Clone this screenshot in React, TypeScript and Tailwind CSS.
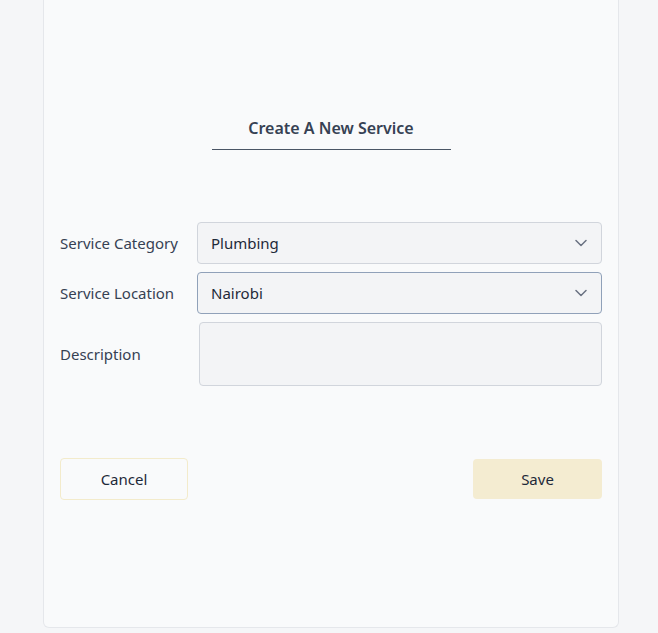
const fields = [
  { label: "Service Category", value: "Plumbing", focused: false },
  { label: "Service Location", value: "Nairobi", focused: true },
];

function Chevron() {
  return (
    <svg width="12" height="8" viewBox="0 0 12 8" fill="none" className="text-gray-500">
      <path d="M1 1.5l5 5 5-5" stroke="currentColor" strokeWidth="1.5" strokeLinecap="round" strokeLinejoin="round" />
    </svg>
  );
}

export default function App() {
  return (
    <div className="min-h-screen bg-[#f5f6f8] font-['Noto_Sans',sans-serif] text-gray-700">
      <div className="ml-[43px] mr-[39px] h-[628px] rounded-b-md border-x border-b border-gray-200 bg-[#f9fafb] px-4">
        <div className="flex justify-center pt-[116px]">
          <h1 className="w-[239px] border-b border-gray-600 pb-[9px] text-center text-base leading-6 font-semibold text-gray-700">
            Create A New Service
          </h1>
        </div>

        <div className="mt-[72px] flex flex-col gap-2">
          {fields.map((f) => (
            <div key={f.label} className="flex items-center">
              <label className="w-[137px] text-[15px]">{f.label}</label>
              <div
                className={
                  f.focused
                    ? "flex h-[42px] flex-1 items-center justify-between rounded-sm border border-slate-400 bg-gray-100 pl-[13px] pr-[14px] text-[15px] text-gray-800"
                    : "flex h-[42px] flex-1 items-center justify-between rounded-sm border border-gray-300 bg-gray-100 pl-[13px] pr-[14px] text-[15px] text-gray-800"
                }
              >
                <span>{f.value}</span>
                <Chevron />
              </div>
            </div>
          ))}
          <div className="flex items-center">
            <label className="w-[139px] text-[15px]">Description</label>
            <textarea className="h-16 flex-1 resize-none rounded-sm border border-gray-300 bg-gray-100 outline-none" />
          </div>
        </div>

        <div className="mt-[72px] flex items-center justify-between">
          <button className="h-[42px] w-32 rounded-sm border border-[#f3ebcb] text-[15px] text-gray-800">
            Cancel
          </button>
          <button className="h-10 w-[129px] rounded-sm bg-[#f4ecd1] text-[15px] text-gray-800">
            Save
          </button>
        </div>
      </div>
    </div>
  );
}
